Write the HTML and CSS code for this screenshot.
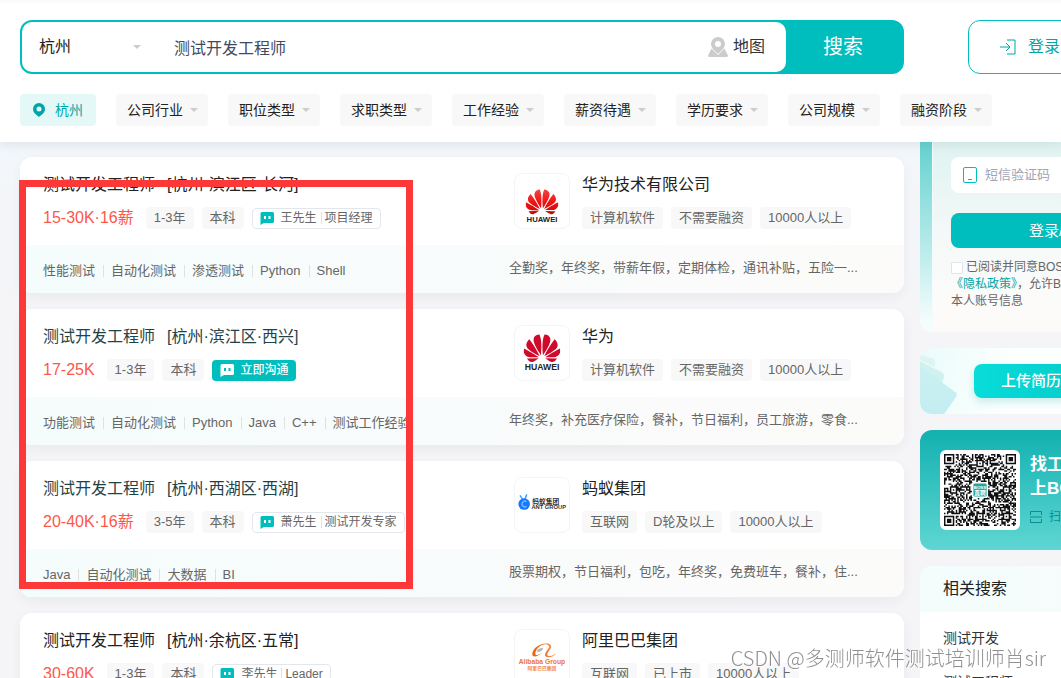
FILE: index.html
```html
<!DOCTYPE html>
<html lang="zh-CN">
<head>
<meta charset="utf-8">
<title>测试开发工程师招聘</title>
<link rel="stylesheet" href="styles.css">
</head>
<body>
<svg class="defs" width="0" height="0" aria-hidden="true">
  <defs>
    <linearGradient id="petal-red" x1="0" y1="0" x2="0" y2="1">
      <stop offset="0" stop-color="#f4453f"/><stop offset=".5" stop-color="#f01414"/><stop offset="1" stop-color="#c80808"/>
    </linearGradient>
    <linearGradient id="ali-orange" x1="0" y1="0" x2="1" y2="0">
      <stop offset="0" stop-color="#f0600c"/><stop offset="1" stop-color="#f7965c"/>
    </linearGradient>
    <linearGradient id="folder" x1="0" y1="0" x2="0" y2="1">
      <stop offset="0" stop-color="#c9f1f0"/><stop offset="1" stop-color="#c4edf3"/>
    </linearGradient>
    <symbol id="caret" viewBox="0 0 8 4"><path d="M0 0h8L4 4z" fill="#ccc"/></symbol>
    <symbol id="bubble" viewBox="0 0 14 13">
      <path d="M2 0h10.500a1.500 1.500 0 0 1 1.500 1.500v8a1.500 1.500 0 0 1-1.500 1.500H4L.500 13V1.500A1.500 1.500 0 0 1 2 0z" fill="currentColor"/>
      <path d="M4 4h2v3H4zM8.500 4h2v3h-2z" fill="var(--eye)"/>
    </symbol>
    <symbol id="huawei" viewBox="0 0 24 24"><path d="M3.67 6.14S1.82 7.91 1.72 9.78v.35c.08 1.51 1.22 2.4 1.22 2.4 1.83 1.79 6.26 4.04 7.3 4.55 0 0 .06.03.1-.01l.02-.04v-.04C7.52 10.8 3.67 6.14 3.67 6.14zM9.65 18.6c-.02-.08-.1-.08-.1-.08l-7.38.26c.8 1.43 2.15 2.53 3.56 2.2.96-.25 3.16-1.78 3.88-2.3.06-.05.04-.09.04-.09zm.08-.78C6.490 15.630.210 12.280.210 12.280c-.15.46-.2.9-.21 1.300v.07c0 1.070.4 1.820.4 1.820.8 1.690 2.340 2.200 2.340 2.200.7.300 1.400.310 1.400.310.12.020 4.400 0 5.540 0 .05 0 .08-.05.08-.05v-.06c0-.03-.03-.05-.03-.05zM9.060 3.190a3.420 3.420 0 0 0-2.570 3.150v.410c.03.600.16 1.050.16 1.050.66 2.900 3.860 7.650 4.550 8.650.05.050.1.030.1.030a.1.1 0 0 0 .06-.1c1.060-10.600-1.110-13.420-1.110-13.420-.32.020-1.190.230-1.190.230zm8.299 2.270s-.49-1.800-2.440-2.280c0 0-.57-.14-1.170-.22 0 0-2.180 2.810-1.120 13.430.01.070.06.080.06.080.07.030.1-.03.1-.03.72-1.030 3.900-5.760 4.550-8.640 0 0 .36-1.400.02-2.340zm-2.920 13.070s-.07 0-.09.050c0 0-.01.070.03.100.7.510 2.850 2 3.880 2.300 0 0 .16.050.43.060h.14c.69-.02 1.900-.37 3-2.260l-7.400-.25zm7.830-8.410c.14-2.060-1.940-3.970-1.940-3.980 0 0-3.850 4.660-6.670 10.800 0 0-.03.080.02.130l.04.010h.06c1.060-.53 5.460-2.770 7.280-4.540 0 0 1.150-.93 1.210-2.420zm1.520 2.140s-6.280 3.370-9.520 5.550c0 0-.05.040-.03.110 0 0 .03.060.07.060 1.160 0 5.560 0 5.670-.02 0 0 .57-.02 1.270-.29 0 0 1.560-.5 2.370-2.270 0 0 .73-1.450.17-3.140z"/></symbol>
  </defs>
</svg>

<header class="header">
  <div class="wrap">
    <div class="header-row">
      <form class="search">
        <div class="search-fields">
          <label class="pick city">
            <select aria-label="城市"><option>杭州</option></select>
            <svg class="caret"><use href="#caret"/></svg>
          </label>
          <input class="query" type="text" aria-label="搜索职位" value="测试开发工程师">
          <a class="map" href="#">
            <svg width="20" height="20" viewBox="0 0 20 20"><path d="M3.500 11.500 0 18.500Q0 20 1.500 20h17q1.500 0 1.500-1.500l-3.500-7L10 18z" fill="#ccc"/><path fill-rule="evenodd" d="M10 0a7 7 0 0 0-7 7c0 4 4 7 7 10 3-3 7-6 7-10a7 7 0 0 0-7-7zm0 4a3 3 0 1 1 0 6 3 3 0 0 1 0-6z" fill="#ccc"/></svg>
            地图
          </a>
        </div>
        <button class="search-btn" type="button">搜索</button>
      </form>
      <button class="login-btn" type="button">
        <svg width="16" height="16" viewBox="0 0 16 16" fill="none" stroke="currentColor"><path d="M7 1h8v14H7M0 8h10M6 4l4 4-4 4"/></svg>
        登录
      </button>
    </div>
    <nav class="filters" aria-label="筛选">
      <button class="filter-city" type="button">
        <svg width="12" height="14" viewBox="0 0 12 14"><path fill-rule="evenodd" d="M6 0a6 6 0 0 0-6 6c0 3.500 3 5.500 6 8 3-2.500 6-4.500 6-8a6 6 0 0 0-6-6zm0 3.500a2.500 2.500 0 1 1 0 5 2.500 2.500 0 0 1 0-5z" fill="currentColor"/></svg>
        杭州
      </button>
      <label class="pick filter"><select aria-label="公司行业"><option>公司行业</option></select><svg class="caret"><use href="#caret"/></svg></label>
      <label class="pick filter"><select aria-label="职位类型"><option>职位类型</option></select><svg class="caret"><use href="#caret"/></svg></label>
      <label class="pick filter"><select aria-label="求职类型"><option>求职类型</option></select><svg class="caret"><use href="#caret"/></svg></label>
      <label class="pick filter"><select aria-label="工作经验"><option>工作经验</option></select><svg class="caret"><use href="#caret"/></svg></label>
      <label class="pick filter"><select aria-label="薪资待遇"><option>薪资待遇</option></select><svg class="caret"><use href="#caret"/></svg></label>
      <label class="pick filter"><select aria-label="学历要求"><option>学历要求</option></select><svg class="caret"><use href="#caret"/></svg></label>
      <label class="pick filter"><select aria-label="公司规模"><option>公司规模</option></select><svg class="caret"><use href="#caret"/></svg></label>
      <label class="pick filter"><select aria-label="融资阶段"><option>融资阶段</option></select><svg class="caret"><use href="#caret"/></svg></label>
    </nav>
  </div>
</header>

<div class="wrap content">
  <main class="jobs">
    <article class="job">
      <div class="job-main">
        <div class="job-info">
          <a class="job-title" href="#"><span>测试开发工程师</span><span>[杭州·滨江区·长河]</span></a>
          <div class="row"><span class="salary">15-30K·16薪</span><span class="tag">1-3年</span><span class="tag">本科</span><span class="hr"><svg class="bubble"><use href="#bubble"/></svg><span>王先生</span><i></i><span>项目经理</span></span></div>
        </div>
        <div class="company">
          <svg class="logo" viewBox="0 0 56 56"><use href="#huawei" x="11" y="12" width="34" height="34" fill="url(#petal-red)"/><text x="28" y="50" class="logo-text" font-size="8">HUAWEI</text></svg>
          <div>
            <a class="company-name" href="#">华为技术有限公司</a>
            <div class="row"><span class="tag">计算机软件</span><span class="tag">不需要融资</span><span class="tag">10000人以上</span></div>
          </div>
        </div>
      </div>
      <div class="job-foot">
        <ul class="skills"><li>性能测试</li><li>自动化测试</li><li>渗透测试</li><li>Python</li><li>Shell</li></ul>
        <p class="welfare">全勤奖，年终奖，带薪年假，定期体检，通讯补贴，五险一...</p>
      </div>
    </article>

    <article class="job">
      <div class="job-main">
        <div class="job-info">
          <a class="job-title visited" href="#"><span>测试开发工程师</span><span>[杭州·滨江区·西兴]</span></a>
          <div class="row"><span class="salary">17-25K</span><span class="tag">1-3年</span><span class="tag">本科</span><button class="chat" type="button"><svg class="bubble"><use href="#bubble"/></svg>立即沟通</button></div>
        </div>
        <div class="company">
          <svg class="logo" viewBox="0 0 56 56"><use href="#huawei" x="9" y="4" width="38" height="38" fill="#cf0a2c"/><text x="28" y="46" class="logo-text" font-size="9">HUAWEI</text></svg>
          <div>
            <a class="company-name" href="#">华为</a>
            <div class="row"><span class="tag">计算机软件</span><span class="tag">不需要融资</span><span class="tag">10000人以上</span></div>
          </div>
        </div>
      </div>
      <div class="job-foot">
        <ul class="skills"><li>功能测试</li><li>自动化测试</li><li>Python</li><li>Java</li><li>C++</li><li>测试工作经验</li></ul>
        <p class="welfare">年终奖，补充医疗保险，餐补，节日福利，员工旅游，零食...</p>
      </div>
    </article>

    <article class="job">
      <div class="job-main">
        <div class="job-info">
          <a class="job-title visited" href="#"><span>测试开发工程师</span><span>[杭州·西湖区·西湖]</span></a>
          <div class="row"><span class="salary">20-40K·16薪</span><span class="tag">3-5年</span><span class="tag">本科</span><span class="hr"><svg class="bubble"><use href="#bubble"/></svg><span>萧先生</span><i></i><span>测试开发专家</span></span></div>
        </div>
        <div class="company">
          <svg class="logo" viewBox="0 0 56 56">
            <path d="M5.500 18.500 8 22M12 17.500 10.500 21.500" stroke="#3aa0ff" stroke-width="1.500" stroke-linecap="round"/>
            <circle cx="9.500" cy="27" r="6" fill="#1677ff"/><path d="M12 24.500a3 3 0 1 0 0 5" fill="none" stroke="#6db8ff" stroke-width="1.500"/>
            <text x="18" y="27" font-size="7" font-weight="700" fill="#333">蚂蚁集团</text>
            <text x="17" y="32" font-size="6" font-weight="700" fill="#333">ANT GROUP</text>
          </svg>
          <div>
            <a class="company-name" href="#">蚂蚁集团</a>
            <div class="row"><span class="tag">互联网</span><span class="tag">D轮及以上</span><span class="tag">10000人以上</span></div>
          </div>
        </div>
      </div>
      <div class="job-foot">
        <ul class="skills"><li>Java</li><li>自动化测试</li><li>大数据</li><li>BI</li></ul>
        <p class="welfare">股票期权，节日福利，包吃，年终奖，免费班车，餐补，住...</p>
      </div>
    </article>

    <article class="job">
      <div class="job-main">
        <div class="job-info">
          <a class="job-title" href="#"><span>测试开发工程师</span><span>[杭州·余杭区·五常]</span></a>
          <div class="row"><span class="salary">30-60K</span><span class="tag">1-3年</span><span class="tag">本科</span><span class="hr"><svg class="bubble"><use href="#bubble"/></svg><span>李先生</span><i></i><span>Leader</span></span></div>
        </div>
        <div class="company">
          <svg class="logo" viewBox="0 0 56 56">
            <path d="M18 24c1-6 9-11 16-10 5 1 4 5 1 8-2 3-2 5 1 5 3 0 5-2 7-3-3 3-6 5-10 4-4-1-1-5 1-8 2-2 2-4-1-5-5-1-11 4-12 9 0 3 4 2 7-1-3 4-11 7-10 1z" fill="url(#ali-orange)"/>
            <path d="M23 21c2-2 5-3 6-2 0 2-3 4-6 4z" fill="#b9b4ae"/>
            <text x="28" y="35" text-anchor="middle" font-size="7" font-weight="700" fill="#ef7431">Alibaba Group</text>
            <text x="28" y="41" text-anchor="middle" font-size="5" font-weight="700" fill="#f08a50">阿里巴巴集团</text>
          </svg>
          <div>
            <a class="company-name" href="#">阿里巴巴集团</a>
            <div class="row"><span class="tag">互联网</span><span class="tag">已上市</span><span class="tag">10000人以上</span></div>
          </div>
        </div>
      </div>
    </article>
  </main>

  <aside class="side">
    <section class="sign">
      <div class="sign-panel">
        <label class="code">
          <svg width="14" height="16" viewBox="0 0 14 16" fill="none" stroke="#00bebd"><rect x=".5" y=".5" width="13" height="15" rx="1.500"/><path d="M5 12.500h4"/></svg>
          <input type="text" aria-label="短信验证码" placeholder="短信验证码">
        </label>
        <button class="sign-btn" type="button">登录/注册</button>
        <div class="agree">
          <label><input type="checkbox">已阅读并同意BOSS</label>
          <p><a href="#">《隐私政策》</a>，允许B</p>
          <p>本人账号信息</p>
        </div>
      </div>
    </section>

    <section class="upload">
      <svg class="folder" width="54" height="66" viewBox="0 0 54 66"><path d="M0 7l12 3q3 1 3 4v5L0 12z" fill="#dcf5f2"/><path d="M0 13l21 11q4 2 3 5l-2 6L0 20z" fill="#d0f1ed"/><path d="M0 18l35 26q3 2 1 5L24 66H0z" fill="url(#folder)"/></svg>
      <button class="upload-btn" type="button">上传简历</button>
    </section>

    <section class="app">
      <div class="qr"><svg id="qr" viewBox="0 0 49 49" role="img" aria-label="二维码"></svg></div>
      <div class="app-text">
        <p class="app-slogan">找工作<br>上BOSS</p>
        <p class="scan"><svg width="12" height="12" viewBox="0 0 12 12" fill="none" stroke="currentColor"><path d="M.5 4V.5h11V4M.5 8v3.500h11V8M0 6h12"/></svg>扫码</p>
      </div>
    </section>

    <section class="related">
      <h2>相关搜索</h2>
      <ul><li><a href="#">测试开发</a></li><li><a href="#">测试工程师</a></li></ul>
    </section>
  </aside>

  <div class="frame"></div>
</div>

<div class="watermark">CSDN @多测师软件测试培训师肖sir</div>
<script src="qr.js"></script>
</body>
</html>
```

FILE: styles.css
```css
* { box-sizing: border-box; margin: 0; padding: 0; }
html { scrollbar-width: none; }
body {
  overflow-x: hidden;
  background: #f5f5f8 linear-gradient(#eef3f8, #f3f6fa 160px, #f5f5f8 300px) no-repeat;
  color: #222;
  font: 14px/20px "Liberation Sans", "Noto Sans CJK SC", sans-serif;
}
.defs { position: absolute; }
a { color: inherit; text-decoration: none; }
ul { list-style: none; }
button, input, select { font: inherit; color: inherit; border: 0; background: none; outline: 0; }
svg { flex: none; }
.wrap { min-width: 1184px; max-width: 1184px; margin-left: 20px; }

.header {
  position: relative;
  z-index: 2;
  padding: 20px 0 16px;
  background: linear-gradient(#f8f8f8, #fff 4px);
  box-shadow: 0 2px 10px rgba(80, 110, 130, .14);
}
.header-row { display: flex; gap: 64px; }
.search {
  display: flex;
  flex: 0 0 884px;
  height: 54px;
  border: 2px solid #00bebd;
  border-radius: 12px;
  background: #00bebd;
}
.search-fields {
  display: flex;
  flex: 1;
  align-items: center;
  padding: 0 21px 0 17px;
  border-radius: 10px;
  background: #fff;
  font-size: 16px;
}
.search-btn { flex: 0 0 116px; padding-right: 2px; color: #fff; font-size: 20px; }
.pick { display: grid; align-items: center; }
.pick select, .pick .caret { grid-area: 1 / 1; }
.pick select { appearance: none; width: 100%; }
.caret { width: 8px; height: 4px; justify-self: end; pointer-events: none; }
.city { width: 102px; margin-right: 33px; }
.query { flex: 1; min-width: 0; height: 50px; color: #414a60; }
.map { display: flex; align-items: center; gap: 5px; color: #333; }
.login-btn {
  display: flex;
  flex: 1;
  align-items: center;
  gap: 12px;
  padding-left: 31px;
  border: 1px solid #00bebd;
  border-radius: 12px;
  color: #00a6a7;
  font-size: 16px;
}
.filters { display: flex; gap: 20px; margin-top: 20px; }
.filter-city {
  display: flex;
  align-items: center;
  justify-content: center;
  gap: 10px;
  width: 76px;
  height: 32px;
  border-radius: 4px;
  background: #e3f8f7;
  color: #00a6a7;
}
.filter { width: 92px; height: 32px; padding: 0 10px 0 11px; border-radius: 4px; background: #f8f8f8; }

.content { position: relative; display: grid; grid-template-columns: 884px 1fr; gap: 16px; }
.jobs { display: grid; gap: 16px; padding: 15px 0 16px; align-content: start; }
.job { border-radius: 12px; overflow: hidden; background: #fff; box-shadow: 0 4px 12px rgba(60, 60, 80, .06); }
.job-main { display: grid; grid-template-columns: 471px 1fr; padding: 16px 23px; }
.job-title { display: flex; gap: 12px; font-size: 16px; line-height: 24px; }
.job-title.visited { color: #1f4446; }
.row { display: flex; align-items: center; gap: 8px; margin-top: 10px; height: 22px; }
.salary { margin-right: 4px; color: #fe574a; font-size: 16px; }
.tag { padding: 0 8px; border-radius: 4px; background: #f8f8f8; color: #666; font-size: 13px; line-height: 22px; }
.bubble { width: 14px; height: 13px; }
.hr, .chat { display: flex; align-items: center; height: 21px; padding: 0 8px; border-radius: 4px; font-size: 12px; line-height: 19px; }
.hr { --eye: #fff; padding: 0 7px; border: 1px solid #e3e7ed; color: #666; }
.hr .bubble { margin-right: 7px; color: #00bebd; }
.hr i { width: 1px; height: 12px; margin: 0 3px 0 4px; background: #e0e0e0; }
.chat { --eye: #00bebd; gap: 6px; background: #00bebd; color: #fff; font-weight: 500; }
.company { display: flex; gap: 12px; }
.logo { width: 56px; height: 56px; border: 1px solid #f4f4f4; border-radius: 8px; }
.logo-text { text-anchor: middle; font-weight: 700; fill: #222; }
.company-name { display: block; font-size: 16px; line-height: 24px; }
.job-foot {
  display: grid;
  grid-template-columns: 466px 350px;
  min-height: 48px;
  padding: 0 23px;
  background: linear-gradient(90deg, #f5fcfc, #fcfbfa);
  color: #666;
  font-size: 13px;
}
.skills { display: flex; align-items: center; padding-top: 4px; }
.skills li { line-height: 20px; white-space: nowrap; }
.skills li + li { display: flex; align-items: center; }
.skills li + li::before { content: ""; width: 1px; height: 12px; margin: 0 7px 0 8px; background: #e0e0e0; }
.welfare { white-space: nowrap; line-height: 46px; }

.side { display: flex; flex-direction: column; gap: 16px; min-width: 0; }
.sign {
  padding-left: 12px;
  border-radius: 0 0 12px 12px;
  overflow: hidden;
  background: linear-gradient(#63d1cf, #f4fdfd 180px);
}
.sign-panel {
  padding: 15px 33px 22px 18px;
  border-left: 1px solid #f4fbfb;
  background: linear-gradient(#dff3f1, #f3f9f8 90px, #fcfbfa 160px);
}
.code { display: flex; align-items: center; gap: 8px; height: 36px; padding-left: 12px; border-radius: 8px; background: #fff; }
.code input { flex: 1; min-width: 0; font-size: 13px; }
.code input::placeholder { color: #a0a4b4; opacity: 1; }
.sign-btn { width: 100%; height: 35px; margin: 20px 0 11px; border-radius: 8px; background: #00bebd; color: #fff; font-size: 15px; }
.agree { color: #666; font-size: 12px; line-height: 17px; white-space: nowrap; }
.agree label { display: flex; align-items: center; gap: 3px; }
.agree p { height: 17px; }
.agree input { appearance: none; width: 12px; height: 12px; border: 1px solid #e0e4ee; border-radius: 1px; background: #fff; }
.agree a { color: #00a6a7; }
.upload {
  display: flex;
  align-items: center;
  height: 66px;
  border-radius: 12px;
  overflow: hidden;
  background: linear-gradient(100deg, #eafbfb, #fbfffe 90px);
}
.upload-btn {
  flex: 1;
  height: 34px;
  margin-right: 16px;
  padding-left: 27px;
  border-radius: 8px;
  background: linear-gradient(90deg, #08dcd9, #00bebd);
  box-shadow: 0 4px 8px rgba(0, 160, 160, .2);
  color: #fff;
  font-size: 15px;
  font-weight: 500;
  text-align: left;
}
.app {
  display: flex;
  gap: 10px;
  padding: 20px;
  border-radius: 12px;
  background: linear-gradient(#12b1b0, #5fd6d3);
}
.qr { width: 80px; height: 80px; padding: 4px; border-radius: 6px; background: #fff; }
.qr svg { display: block; }
.app-text { padding-top: 3px; }
.app-slogan { color: #fff; font-size: 17px; font-weight: 700; line-height: 24px; white-space: nowrap; }
.scan { display: flex; align-items: center; gap: 7px; margin-top: 6px; color: #088f8f; font-size: 12px; }
.related { border-radius: 12px; overflow: hidden; background: #fff; }
.related h2 { padding: 0 23px; background: linear-gradient(90deg, #f3fdfc, #f8fbfb); font-size: 16px; font-weight: 400; line-height: 46px; }
.related ul { padding: 4px 23px; }
.related li { line-height: 44px; color: #333; }

.frame {
  position: absolute;
  z-index: 1;
  left: -1px;
  top: 38px;
  width: 394px;
  height: 409px;
  border: 7px solid #fd3838;
  pointer-events: none;
}
.watermark {
  position: fixed;
  z-index: 3;
  right: 15px;
  bottom: 8px;
  color: rgba(125, 125, 125, .85);
  font: 300 20px/24px "Noto Sans CJK SC", sans-serif;
  text-shadow: 1px 1px 0 #fff;
}
```

FILE: qr.js
```js
(function () {
  var size = 49, seed = 20231, d = "";
  var corners = [[0, 0], [size - 7, 0], [0, size - 7]];
  var marks = [[24, 6], [6, 24], [42, 24], [24, 42], [42, 42]];

  function random() {
    seed = (seed * 1103515245 + 12345) % 2147483648;
    return seed / 2147483648;
  }
  function dark(x, y) {
    var i, r;
    for (i = 0; i < 3; i++) {
      r = Math.max(Math.abs(x - corners[i][0] - 3), Math.abs(y - corners[i][1] - 3));
      if (r <= 4) return r !== 2 && r !== 4;
    }
    for (i = 0; i < marks.length; i++) {
      r = Math.max(Math.abs(x - marks[i][0]), Math.abs(y - marks[i][1]));
      if (r <= 2) return r !== 1;
    }
    return random() > 0.48;
  }
  for (var y = 0; y < size; y++)
    for (var x = 0; x < size; x++)
      if (dark(x, y)) d += "M" + x + " " + y + "h1v1h-1z";

  document.getElementById("qr").innerHTML =
    '<path d="' + d + '" fill="#111"/>' +
    '<rect x="19" y="19" width="11" height="11" rx="1" fill="#fff"/>' +
    '<rect x="20" y="20" width="9" height="9" rx="1" fill="#22a79b"/>' +
    '<text x="24.500" y="24" text-anchor="middle" font-size="3" font-weight="700" fill="#fff">BOSS</text>' +
    '<text x="24.500" y="28" text-anchor="middle" font-size="4" font-weight="700" fill="#fff">直聘</text>';
})();
```
